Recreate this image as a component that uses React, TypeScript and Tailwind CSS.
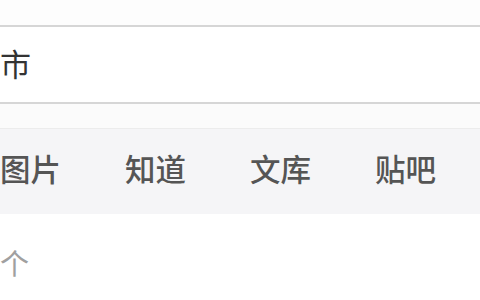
const tabs = ['图片', '知道', '文库', '贴吧']

export default function App() {
  return (
    <div
      className="w-[480px] h-[300px] overflow-hidden bg-white flex flex-col"
      style={{ fontFamily: '"Noto Sans CJK SC", "Noto Sans", sans-serif' }}
    >
      <div className="h-[25px] bg-[#fdfdfd]" />
      <div className="h-[79px] bg-white border-y-2 border-[#d6d6d6] flex items-center pb-[4px]">
        <span className="text-[31px] leading-none text-[#333]">市</span>
      </div>
      <div className="h-[25px] bg-[#fbfbfb] border-b border-[#ececec]" />
      <div className="h-[85px] bg-[#f5f5f7] flex items-center gap-[64px] pb-[6px]">
        {tabs.map((t) => (
          <span key={t} className="text-[30.5px] leading-none font-medium text-[#555]">
            {t}
          </span>
        ))}
      </div>
      <div className="flex-1 bg-white pt-[34px]">
        <span className="text-[29px] leading-none text-[#a0a0a0]">个</span>
      </div>
    </div>
  )
}
